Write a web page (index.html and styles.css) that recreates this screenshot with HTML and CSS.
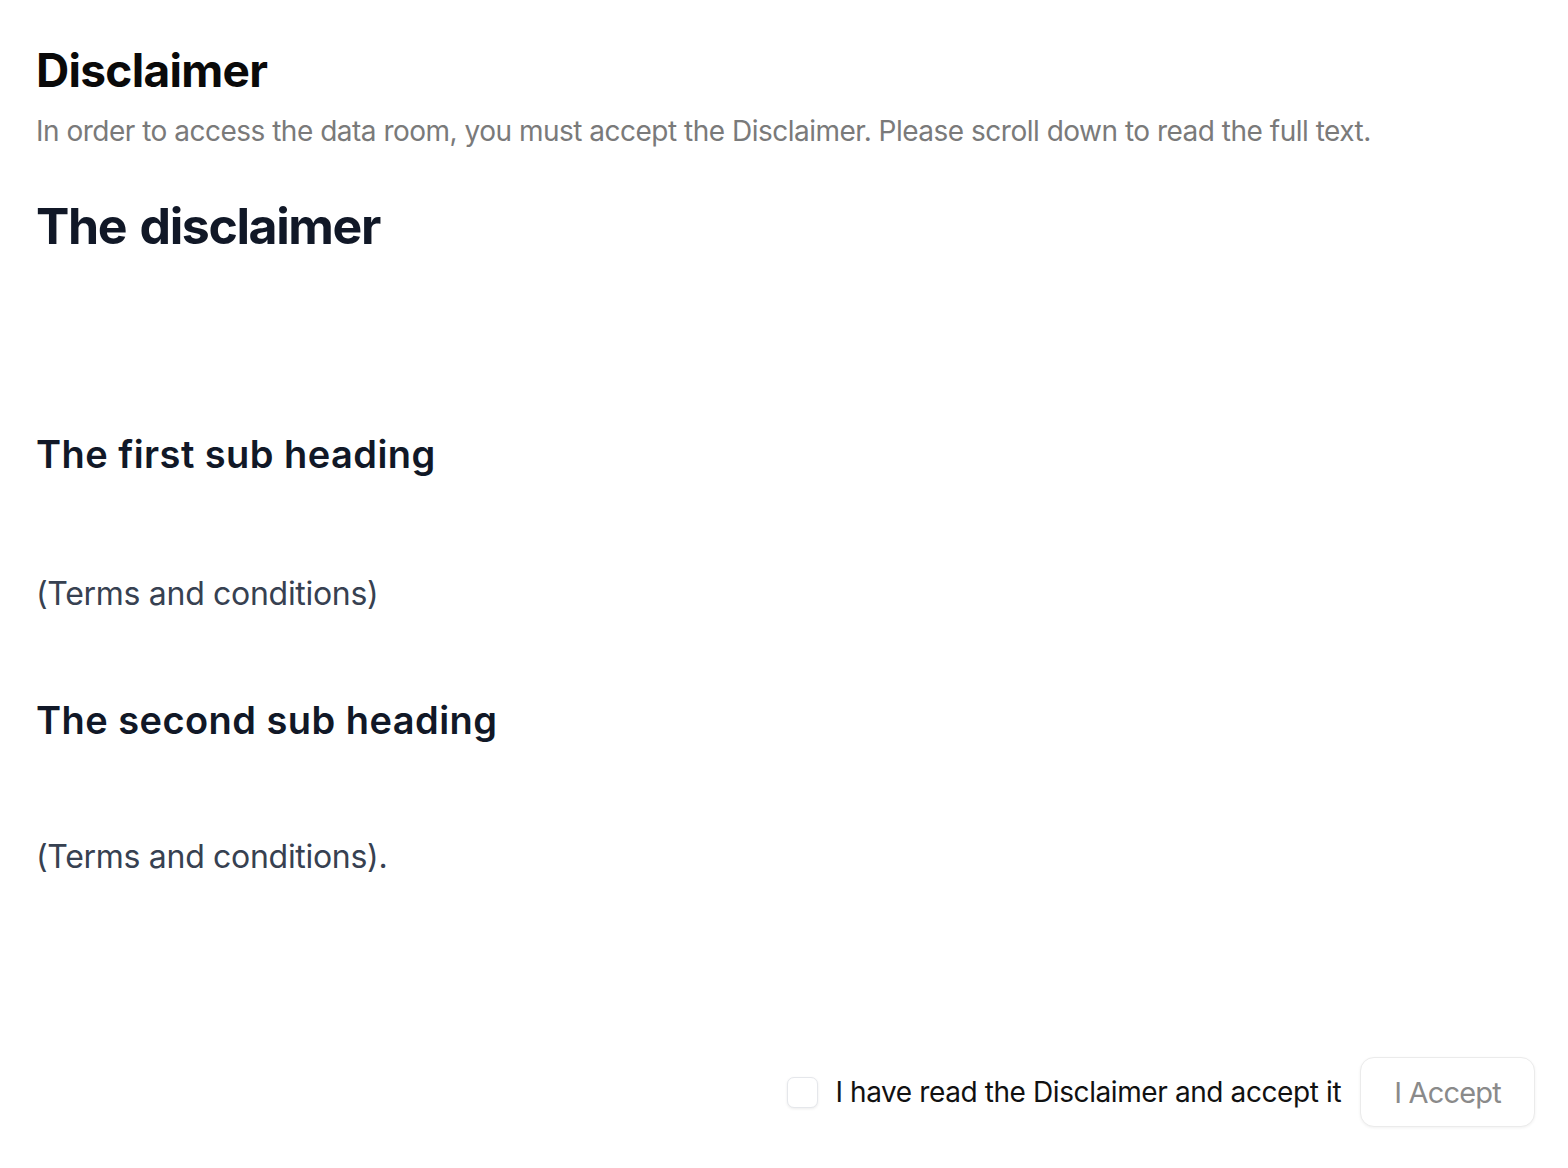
FILE: index.html
```html
<!DOCTYPE html>
<html>
<head>
<link rel="stylesheet" href="styles.css">
</head>
<body>

<div class="page">
    <div class="header">
        <h1 class="title">Disclaimer</h1>
        <p class="subtitle">In order to access the data room, you must accept the Disclaimer. Please scroll down to read the full text.</p>
    </div>

    <div class="content">
        <h1>The disclaimer</h1>
        <h2 class="first">The first sub heading</h2>
        <p>(Terms and conditions)</p>
        <h2>The second sub heading</h2>
        <p>(Terms and conditions).</p>
    </div>

    <div class="footer">
        <label class="accept">
            <span class="checkbox"></span>
            <span class="accept-text">I have read the Disclaimer and accept it</span>
        </label>
        <button class="accept-button" disabled>I Accept</button>
    </div>
</div>

</body>
</html>
```

FILE: styles.css
```css
html, body {
    margin: 0;
    padding: 0;
    background: #FFFFFF;
}

body {
    font-family: Inter, "Noto Sans", sans-serif;
}

.page {
    min-height: 100vh;
    box-sizing: border-box;
    padding: 42px 33px 41px 36px;
    display: flex;
    flex-direction: column;
}

.title {
    margin: 0;
    font-size: 46px;
    line-height: 56px;
    font-weight: 700;
    color: #0A0A0A;
    letter-spacing: -0.7px;
}

.subtitle {
    margin: 13px 0 0;
    font-size: 28px;
    line-height: 40px;
    color: #7A7A7A;
    letter-spacing: -0.5px;
}

.content h1 {
    margin: 43px 0 0;
    font-size: 50px;
    line-height: 64px;
    font-weight: 700;
    color: #111827;
    letter-spacing: -1.4px;
    word-spacing: 3px;
}

.content h2 {
    margin: 80px 0 0;
    font-size: 38px;
    line-height: 48px;
    font-weight: 600;
    color: #111827;
    letter-spacing: 0.45px;
}

.content h2.first {
    margin-top: 172px;
}

.content p {
    margin: 94px 0 0;
    font-size: 32px;
    line-height: 44px;
    color: #374151;
    letter-spacing: -0.3px;
}

.content h2 + p:last-child {
    margin-top: 91px;
}

.footer {
    margin-top: auto;
    display: flex;
    justify-content: flex-end;
    align-items: center;
    gap: 19px;
}

.accept {
    display: flex;
    align-items: center;
    gap: 17px;
}

.checkbox {
    width: 29px;
    height: 29px;
    border: 1px solid #E5E7EB;
    border-radius: 7px;
    box-shadow: 0 1px 3px rgba(0, 0, 0, 0.08);
    background: #FFFFFF;
}

.accept-text {
    font-size: 28px;
    line-height: 40px;
    color: #111111;
    letter-spacing: -0.4px;
}

.accept-button {
    height: 70px;
    padding: 0 33px;
    font-family: inherit;
    font-size: 29px;
    color: #8A8A8A;
    background: #FFFFFF;
    border: 1px solid #EBEBEB;
    border-radius: 14px;
    box-shadow: 0 1px 3px rgba(0, 0, 0, 0.06);
    letter-spacing: -0.8px;
}
```
